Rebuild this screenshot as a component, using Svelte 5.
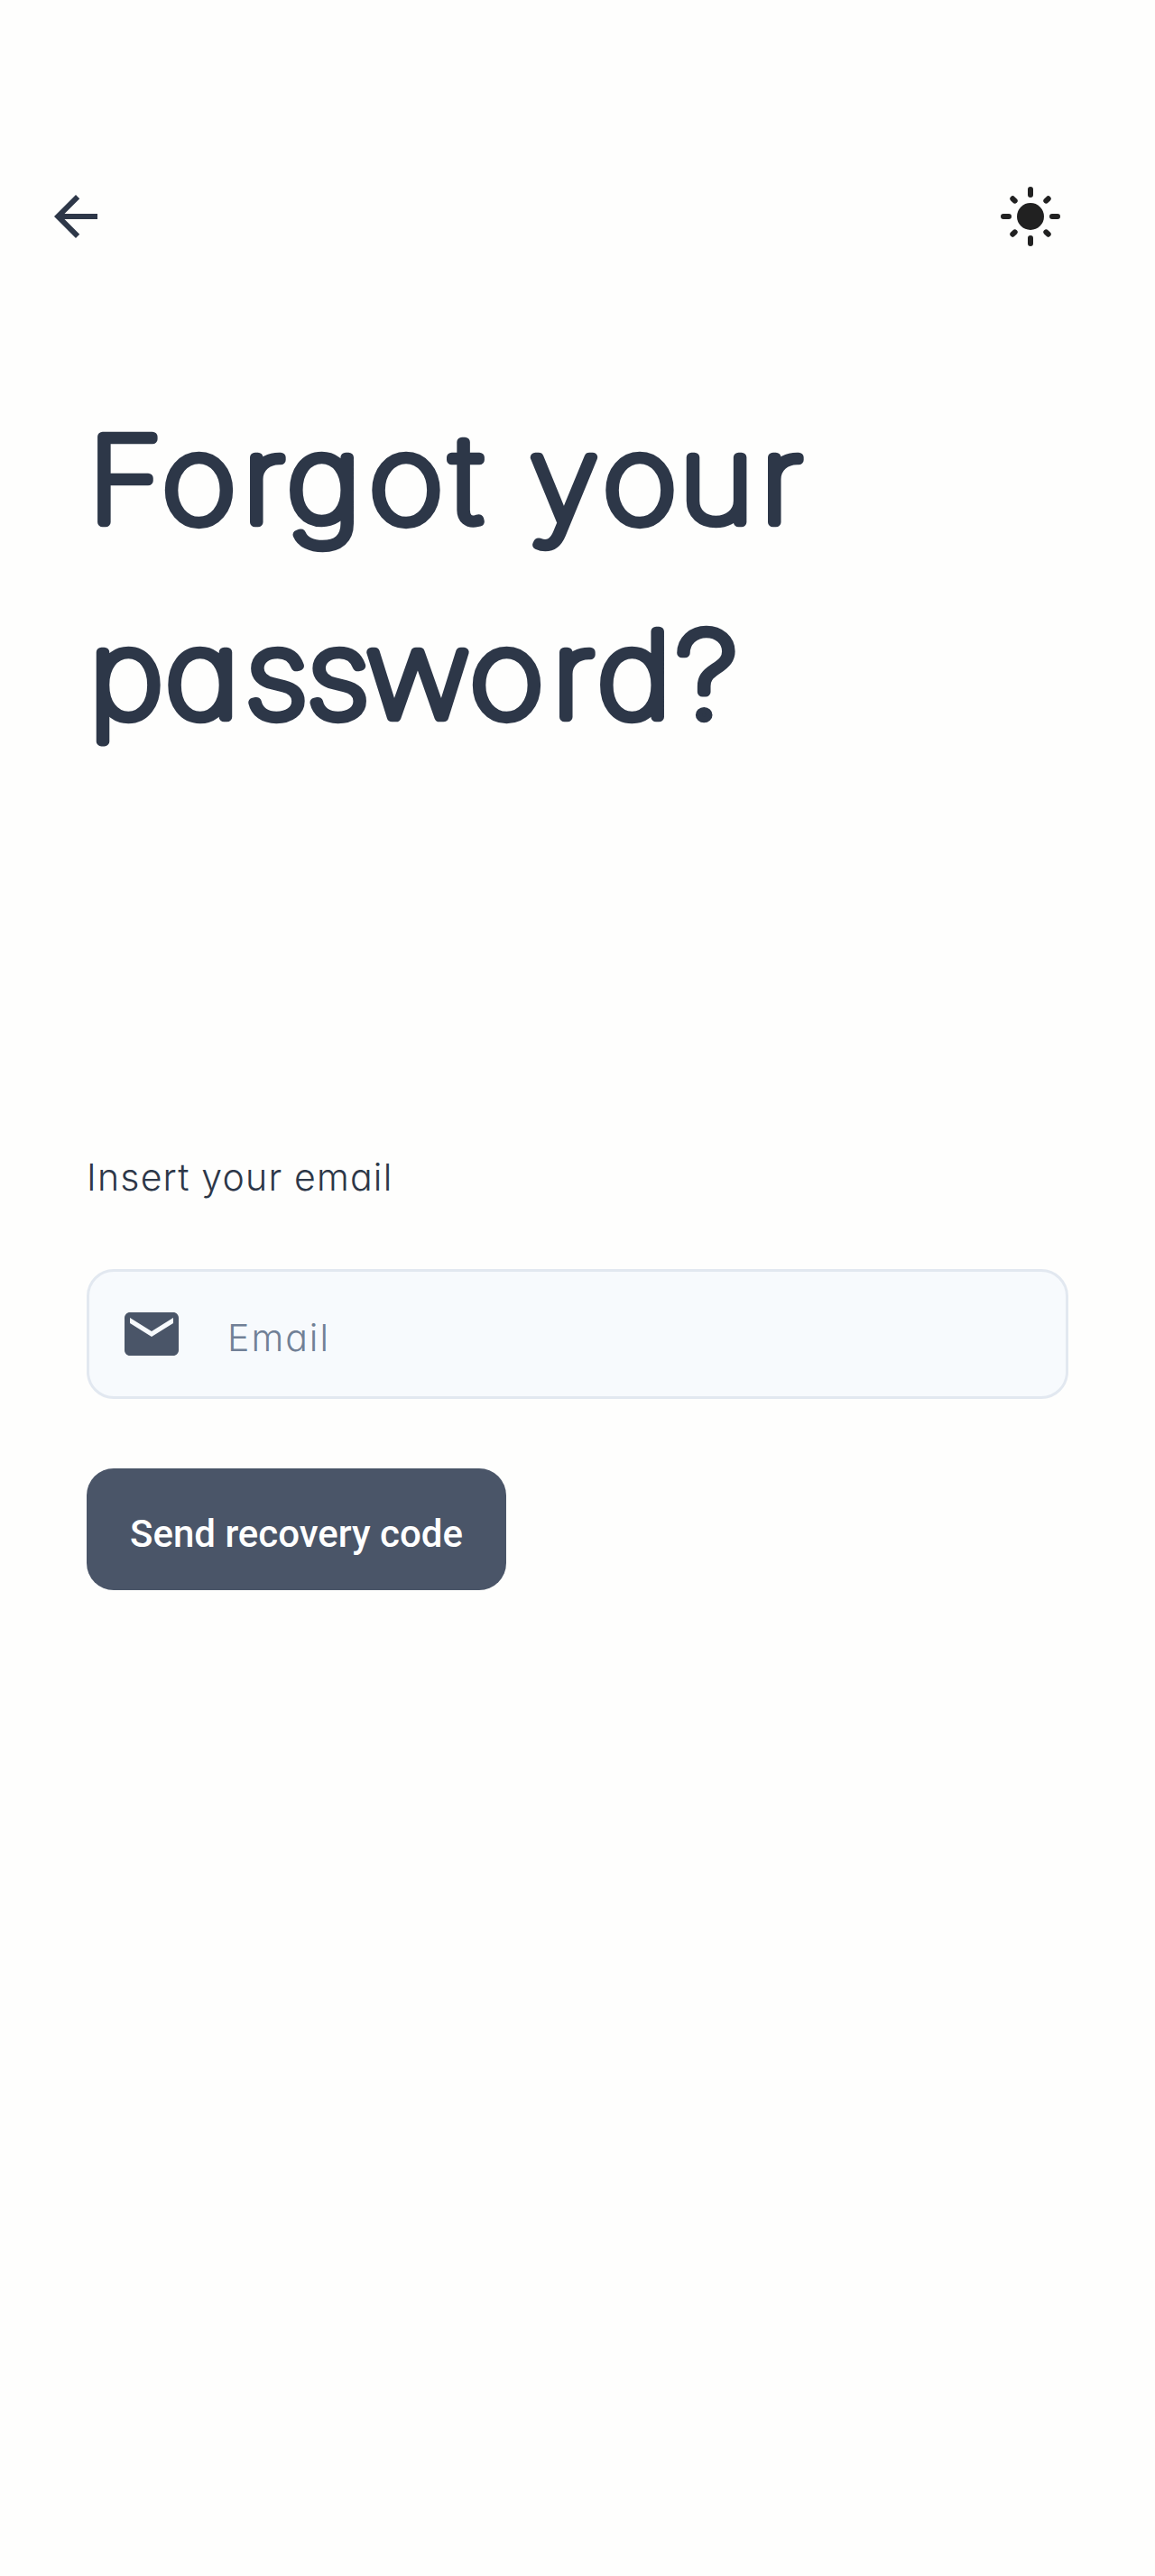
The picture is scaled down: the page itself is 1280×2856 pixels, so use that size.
<script>
  // Glyph centres for each heading line; the letters are drawn slightly extended.
  const stretch = 1.08;
  const lines = [
    { text: 'Forgot your', y: 579, x: [139, 220.5, 292, 359, 450, 517, 560, 625, 709, 794, 866] },
    { text: 'password?', y: 795, x: [140, 224, 306.3, 374.5, 463, 561.5, 635, 703, 783] }
  ];
  const centres = (line) => line.x.map((x) => (x / stretch).toFixed(1)).join(' ');
</script>

<main>
  <header>
    <button class="icon" aria-label="Back">
      <svg viewBox="0 0 24 24"><path d="M20 11H7.83l5.59-5.59L12 4l-8 8 8 8 1.41-1.41L7.83 13H20v-2z" /></svg>
    </button>
    <button class="icon sun" aria-label="Toggle theme">
      <svg viewBox="0 0 24 24">
        <circle cx="12" cy="12" r="5" />
        <path class="rays" d="M12 2v2M12 20v2M2 12h2M20 12h2M5.43 5.43l.8.8M17.77 17.77l.8.8M18.57 5.43l-.8.8M6.23 17.77l-.8.8" />
      </svg>
    </button>
  </header>

  <h1>
    <svg viewBox="96 440 1088 432">
      <g transform="scale({stretch} 1)">
        {#each lines as line}
          <text y={line.y} x={centres(line)}>{line.text}</text>
        {/each}
      </g>
    </svg>
  </h1>

  <form onsubmit={(e) => e.preventDefault()}>
    <label for="email">Insert your email</label>
    <div class="field">
      <svg viewBox="0 0 24 24"><path d="M20 4H4c-1.1 0-1.99.9-1.99 2L2 18c0 1.1.9 2 2 2h16c1.1 0 2-.9 2-2V6c0-1.1-.9-2-2-2zm0 4l-8 5-8-5V6l8 5 8-5v2z" /></svg>
      <input id="email" type="text" placeholder="Email" />
    </div>
    <button class="submit" type="submit">Send recovery code</button>
  </form>
</main>

<style>
  :global(body) { background: #fefefd; }
  main {
    box-sizing: border-box;
    width: 1280px;
    height: 2856px;
    padding-top: 204px;
    background: #fefefd;
    color: #2d3748;
    font-family: Inter, 'Open Sans', sans-serif;
    font-feature-settings: 'cv11';
  }
  header {
    display: flex;
    justify-content: space-between;
    padding: 0 102px 0 48px;
    height: 72px;
  }
  button { border: 0; padding: 0; background: none; color: inherit; }
  svg { display: block; fill: currentColor; }
  .icon, .icon svg { width: 72px; height: 72px; }
  .sun { color: #212121; }
  .rays { fill: none; stroke: currentColor; stroke-width: 2; stroke-linecap: round; }
  h1 { margin: 164px 96px 0; height: 432px; }
  h1 svg { width: 1088px; height: 432px; overflow: visible; }
  h1 text {
    font-size: 131px;
    font-weight: 100;
    text-anchor: middle;
    stroke: currentColor;
    stroke-width: 10.5px;
    stroke-linejoin: round;
    stroke-linecap: round;
  }
  form {
    display: flex;
    flex-direction: column;
    align-items: flex-start;
    padding: 0 96px;
    margin-top: 408px;
  }
  label {
    font-size: 41px;
    line-height: 50px;
    font-weight: 280;
    letter-spacing: 1.2px;
    white-space: nowrap;
  }
  .field {
    box-sizing: border-box;
    display: flex;
    align-items: center;
    width: 1088px;
    height: 144px;
    margin-top: 77px;
    padding-left: 33px;
    border: 3px solid #e2e8f0;
    border-radius: 30px;
    background: #f7fafd;
  }
  .field svg { width: 72px; height: 72px; color: #4a5568; flex: none; }
  input {
    flex: 1;
    margin: 8px 33px 0 48px;
    padding: 0;
    border: 0;
    outline: 0;
    background: none;
    font: 280 41px/50px Inter, 'Open Sans', sans-serif;
    font-feature-settings: 'cv11';
    letter-spacing: 2px;
  }
  input::placeholder { color: #718096; opacity: 1; }
  .submit {
    box-sizing: border-box;
    width: 465px;
    height: 135px;
    margin-top: 77px;
    padding-top: 10px;
    border-radius: 30px;
    background: #4a5568;
    color: #fff;
    font: 500 42px/50px Roboto, sans-serif;
    white-space: nowrap;
  }
</style>
